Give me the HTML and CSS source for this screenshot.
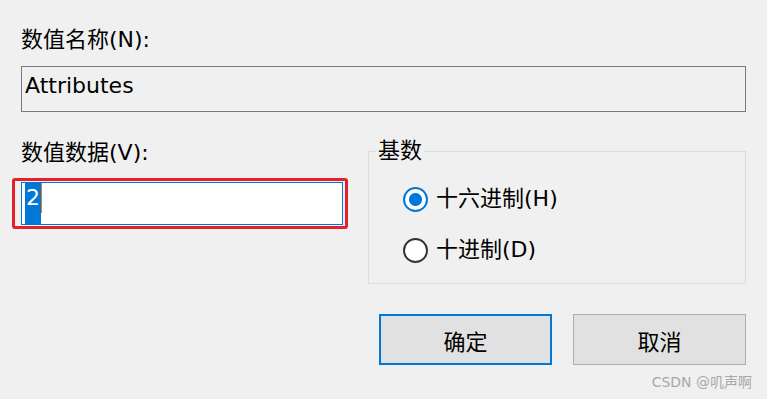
FILE: index.html
```html
<!DOCTYPE html>
<html lang="zh-CN">

<head>
    <meta charset="UTF-8">
    <meta name="viewport" content="width=device-width, initial-scale=1.0">
    <title>编辑 DWORD (32 位)值</title>
    <link rel="stylesheet" href="styles.css">
</head>

<body>
    <div class="dialog">
        <div class="field-label">数值名称(N):</div>
        <div class="text-box readonly">Attributes</div>

        <div class="value-row">
            <div class="value-col">
                <div class="field-label">数值数据(V):</div>
                <div class="marked">
                    <div class="text-box focused"><span class="selected">2</span><span class="caret"></span></div>
                </div>
            </div>
            <fieldset class="base-group">
                <legend>基数</legend>
                <label class="radio-row">
                    <input type="radio" name="base" checked>
                    <span>十六进制(H)</span>
                </label>
                <label class="radio-row">
                    <input type="radio" name="base">
                    <span>十进制(D)</span>
                </label>
            </fieldset>
        </div>

        <div class="button-row">
            <button class="default" type="button">确定</button>
            <button type="button">取消</button>
        </div>
        <div class="watermark">CSDN @叽声啊</div>
    </div>
</body>

</html>
```

FILE: styles.css
```css
body {
    margin: 0;
    padding: 0;
    background-color: #f0f0f0;
    font-family: "DejaVu Sans", "Noto Sans CJK SC", sans-serif;
    font-size: 22px;
    color: #000;
}

.dialog {
    padding: 26px 21px 0 21px;
}

.field-label {
    line-height: 28px;
    height: 28px;
}

.text-box {
    box-sizing: border-box;
    border: 1px solid #7a7a7a;
    padding: 0 3px;
}

.text-box.readonly {
    margin-top: 12px;
    height: 46px;
    line-height: 38px;
    background-color: #f0f0f0;
}

.value-row {
    display: flex;
    gap: 25px;
    margin-top: 27px;
    align-items: flex-start;
}

.value-col {
    width: 322px;
}

.marked {
    position: relative;
    margin-top: 15px;
}

/* red annotation box drawn over the input */
.marked::after {
    content: "";
    position: absolute;
    left: -9px;
    right: -5px;
    top: -4px;
    bottom: -4px;
    border: 3px solid #e4202a;
    border-radius: 3px;
}

.text-box.focused {
    height: 43px;
    border-color: #0078d7;
    background-color: #fff;
    line-height: 30px;
    display: flex;
}

.selected {
    background-color: #0078d7;
    color: #fff;
    padding: 0 1px;
}

.caret {
    width: 1px;
    height: 30px;
    background-color: #e07a2a;
}

.base-group {
    flex: 1;
    margin: -2px 0 0 0;
    padding: 0 7px 19px 34px;
    border: 1px solid #dcdcdc;
    min-width: 0;
}

.base-group legend {
    line-height: 28px;
    padding: 0 2px;
    margin-left: -27px;
}

.radio-row {
    display: flex;
    align-items: center;
    gap: 8px;
    height: 28px;
    line-height: 28px;
    margin-top: 20px;
}

.radio-row+.radio-row {
    margin-top: 23px;
}

.radio-row input {
    appearance: none;
    margin: 0;
    width: 25px;
    height: 25px;
    border: 2px solid #333;
    border-radius: 50%;
    background-color: #fff;
}

.radio-row input:checked {
    border-color: #0078d7;
    background: radial-gradient(circle, #0078d7 0 6px, #fff 7px);
}

.button-row {
    display: flex;
    justify-content: flex-end;
    gap: 21px;
    margin-top: 30px;
}

button {
    width: 173px;
    height: 51px;
    font-family: inherit;
    font-size: 22px;
    background-color: #e1e1e1;
    border: 1px solid #adadad;
    color: #000;
}

button.default {
    border: 2px solid #0078d7;
}

.watermark {
    text-align: right;
    margin-right: -6px;
    margin-top: 6px;
    font-size: 14px;
    color: #a8a8a8;
}
```
